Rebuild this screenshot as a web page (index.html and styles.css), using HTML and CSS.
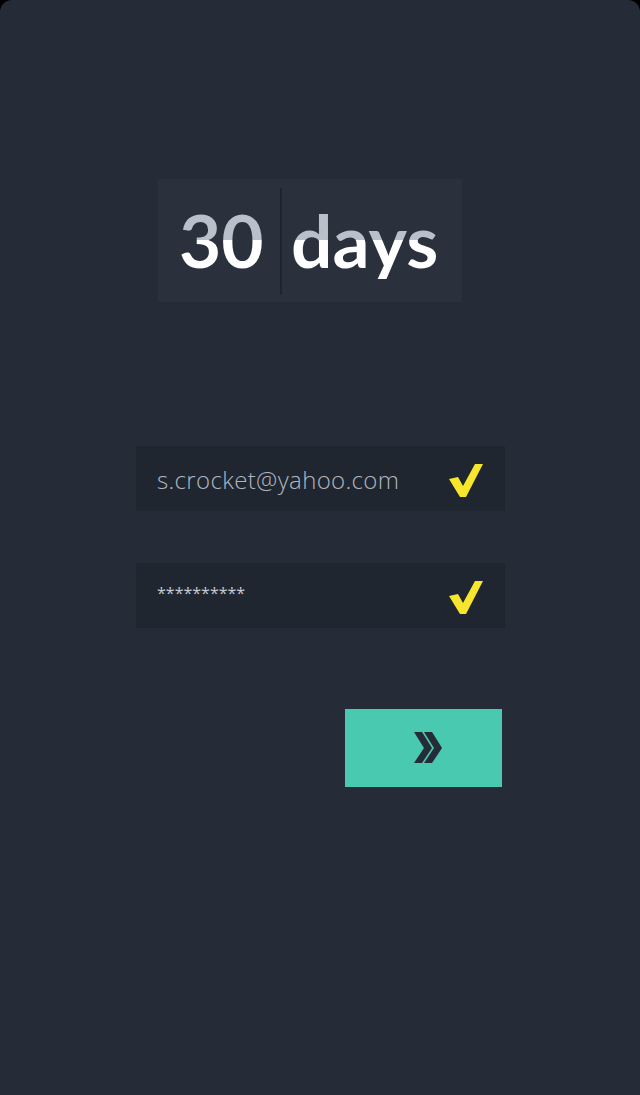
FILE: index.html
```html
<!DOCTYPE html>
<html>
<head>
<meta charset="utf-8">
<link rel="stylesheet" href="styles.css">
</head>
<body>
<div class="screen">
  <div class="counter">
    <div class="cell cell-num"><span class="flip">30</span></div>
    <div class="divider"></div>
    <div class="cell cell-word"><span class="flip">days</span></div>
  </div>
  <div class="field field-email">
    <span class="value">s.crocket@yahoo.com</span>
    <svg class="check" width="34" height="33" viewBox="0 0 34 33"><polygon points="0,15 9,13 14,22 26,0 34,0 17,33 11,33" fill="#f7e62b"/></svg>
  </div>
  <div class="field field-pass">
    <span class="value pass">**********</span>
    <svg class="check" width="34" height="33" viewBox="0 0 34 33"><polygon points="0,15 9,13 14,22 26,0 34,0 17,33 11,33" fill="#f7e62b"/></svg>
  </div>
  <div class="actions">
    <button class="go">
      <svg width="30" height="32" viewBox="0 0 30 32"><polygon points="0,0 8,0 18,16 8,31 0,31 10,16" fill="#252c38"/><polygon points="10,0 18,0 28,16 18,31 10,31 20,16" fill="#252c38" stroke="#48c9b0" stroke-width="1.5" paint-order="stroke"/></svg>
    </button>
  </div>
</div>
</body>
</html>
```
FILE: styles.css
```css
html, body {
  margin: 0;
  padding: 0;
  background: #000;
}
.screen {
  width: 640px;
  height: 1095px;
  background: #252c38;
  border-radius: 12px 12px 0 0;
  display: flex;
  flex-direction: column;
  align-items: flex-start;
  padding-top: 179px;
  box-sizing: border-box;
  font-family: Lato, "Open Sans", sans-serif;
}
.counter {
  margin-left: 158px;
  width: 304px;
  height: 123px;
  background: #2a303c;
  display: flex;
  align-items: stretch;
}
.cell {
  display: flex;
  align-items: center;
}
.cell-num { width: 122px; padding-left: 21px; box-sizing: border-box; }
.cell-word { flex: 1; padding-left: 9px; }
.divider {
  width: 2px;
  margin: 9px 0 7px;
  background: #1f252e;
}
.flip {
  font-size: 73px;
  font-weight: 700;
  line-height: 1;
  background: linear-gradient(#b9c0ca 0, #b9c0ca 50%, #ffffff 50%, #ffffff 100%);
  -webkit-background-clip: text;
  background-clip: text;
  color: transparent;
  padding-top: 2px;
  padding-bottom: 2px;
}
.field {
  margin-left: 136px;
  width: 369px;
  height: 65px;
  background: #20262f;
  display: flex;
  align-items: center;
  justify-content: space-between;
  padding: 0 22px 0 21px;
  box-sizing: border-box;
}
.field-email { margin-top: 144px; }
.field-pass { margin-top: 52px; }
.value {
  color: #aeb5c0;
  font-family: "Open Sans", Lato, sans-serif;
  font-size: 24px;
  letter-spacing: 0.35px;
  font-weight: 300;
  margin-top: 1px;
}
.pass {
  color: #c3c9d2;
  font-size: 16px;
  letter-spacing: 0;
  font-weight: 400;
  margin-top: -6px;
}
.check { display: block; margin-top: 4px; }
.actions {
  margin-left: 345px;
  margin-top: 81px;
}
.go {
  width: 157px;
  height: 78px;
  border: 0;
  padding: 0;
  background: #48c9b0;
  display: flex;
  align-items: center;
  justify-content: center;
}
.go svg { display: block; margin-left: 10px; }
```
